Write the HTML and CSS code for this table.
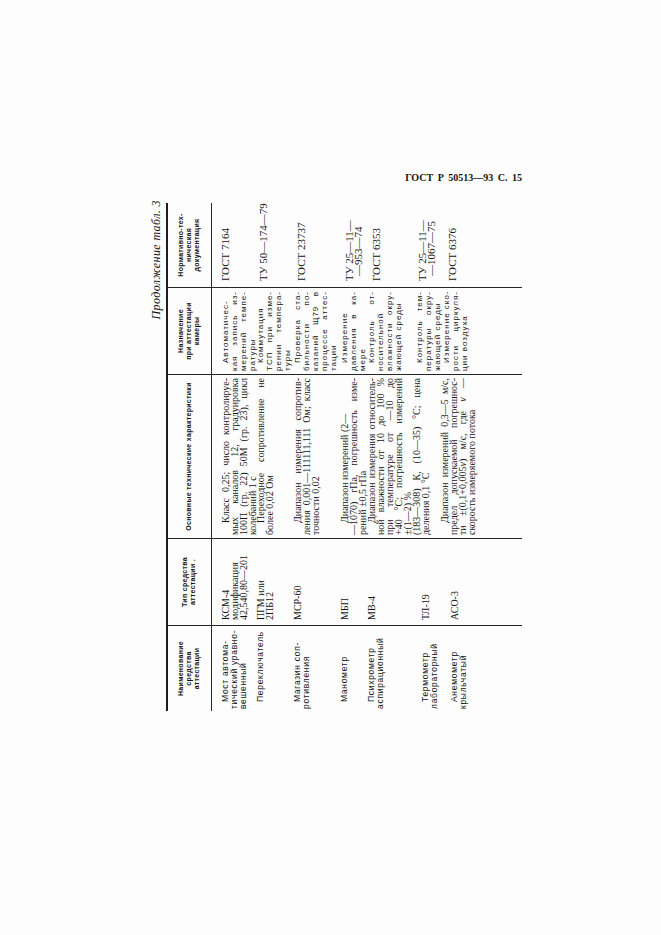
FILE: index.html
```html
<!DOCTYPE html>
<html lang="ru">
<head>
<meta charset="utf-8">
<title>ГОСТ Р 50513—93 С. 15</title>
<link rel="stylesheet" href="styles.css">
</head>
<body>
<div class="page">
  <div class="running-head">ГОСТ Р 50513—93 С. 15</div>
  <div class="rot-wrap">
    <div class="sheet">
      <div class="caption">Продолжение табл. 3</div>
      <div class="table">
        <div class="thead">
          <div class="th c1"><span>Наименование<br>средства<br>аттестации</span></div>
          <div class="th c2"><span>Тип средства<br>аттестации .</span></div>
          <div class="th c3"><span>Основные технические характеристики</span></div>
          <div class="th c4"><span>Назначение<br>при аттестации<br>камеры</span></div>
          <div class="th c5"><span>Нормативно-тех-<br>ническая<br>документация</span></div>
        </div>
        <div class="tbody">
          <div class="row first">
            <div class="td c1"><span class="ln ind">Мост автома-</span><span class="ln">тический уравно-</span><span class="ln">вешенный</span></div>
            <div class="td c2"><span class="ln">КСМ-4</span><span class="ln">модификация</span><span class="ln">42,540,80—201</span></div>
            <div class="td c3"><span class="ln j ind">Класс 0,25; число контролируе-</span><span class="ln j">мых каналов 12, градуировка</span><span class="ln j">100П (гр. 22) 50М (гр. 23), цикл</span><span class="ln">колебаний 1 с</span></div>
            <div class="td c4"><span class="ln j ind">Автоматичес-</span><span class="ln j">кая запись из-</span><span class="ln j">мерений темпе-</span><span class="ln">ратуры</span></div>
            <div class="td c5"><span class="ln">ГОСТ 7164</span></div>
          </div>
          <div class="row">
            <div class="td c1"><span class="ln ind">Переключатель</span></div>
            <div class="td c2"><span class="ln">ПГМ или</span><span class="ln">2ПБ12</span></div>
            <div class="td c3"><span class="ln j ind">Переходное сопротивление не</span><span class="ln">более 0,02 Ом</span></div>
            <div class="td c4"><span class="ln ind">Коммутация</span><span class="ln j">ТСП при изме-</span><span class="ln j">рении темпера-</span><span class="ln">туры</span></div>
            <div class="td c5 pt-3"><span class="ln">ТУ 50—174—79</span></div>
          </div>
          <div class="row">
            <div class="td c1"><span class="ln ind">Магазин соп-</span><span class="ln">ротивления</span></div>
            <div class="td c2"><span class="ln">МСР-60</span></div>
            <div class="td c3"><span class="ln j ind">Диапазон измерения сопротив-</span><span class="ln j">ления 0,001—111111,111 Ом; класс</span><span class="ln">точности 0,02</span></div>
            <div class="td c4"><span class="ln j ind">Проверка ста-</span><span class="ln j">бильности по-</span><span class="ln j">казаний Щ79 в</span><span class="ln j">процессе аттес-</span><span class="ln">тации</span></div>
            <div class="td c5 pt-4"><span class="ln">ГОСТ 23737</span></div>
          </div>
          <div class="row">
            <div class="td c1"><span class="ln ind">Манометр</span></div>
            <div class="td c2"><span class="ln">МБП</span></div>
            <div class="td c3"><span class="ln ind">Диапазон измерений (2—</span><span class="ln j">—1070) гПа, погрешность изме-</span><span class="ln">рений ±0,5 гПа</span></div>
            <div class="td c4"><span class="ln ind">Измерение</span><span class="ln j">давления в ка-</span><span class="ln">мере</span></div>
            <div class="td c5 pt-5"><span class="ln">ТУ 25—11—</span><span class="ln sub">—953—74</span></div>
          </div>
          <div class="row">
            <div class="td c1"><span class="ln ind">Психрометр</span><span class="ln">аспирационный</span></div>
            <div class="td c2"><span class="ln">МВ-4</span></div>
            <div class="td c3"><span class="ln j ind">Диапазон измерения относитель-</span><span class="ln j">ной влажности от 10 до 100 %</span><span class="ln j">при температуре от —10 до</span><span class="ln j">+40 °С; погрешность измерений</span><span class="ln">±(1—2) %</span></div>
            <div class="td c4"><span class="ln j ind">Контроль от-</span><span class="ln">носительной</span><span class="ln j">влажности окру-</span><span class="ln">жающей среды</span></div>
            <div class="td c5 pt-5"><span class="ln">ГОСТ 6353</span></div>
          </div>
          <div class="row">
            <div class="td c1 pt-9"><span class="ln ind">Термометр</span><span class="ln">лабораторный</span></div>
            <div class="td c2 pt-9"><span class="ln">ТЛ-19</span></div>
            <div class="td c3"><span class="ln j">(183—308) К, (10—35) °С; цена</span><span class="ln">деления 0,1 °С</span></div>
            <div class="td c4 pt-3"><span class="ln j ind">Контроль тем-</span><span class="ln j">пературы окру-</span><span class="ln">жающей среды</span></div>
            <div class="td c5 pt-6"><span class="ln">ТУ 25—11—</span><span class="ln sub">—1067—75</span></div>
          </div>
          <div class="row">
            <div class="td c1 pt-10"><span class="ln ind">Анемометр</span><span class="ln">крыльчатый</span></div>
            <div class="td c2 pt-10"><span class="ln">АСО-3</span></div>
            <div class="td c3"><span class="ln j ind">Диапазон измерений 0,3—5 м/с,</span><span class="ln j">предел допускаемой погрешнос-</span><span class="ln j">ти ±(0,1+0,005<i>v</i>) м/с, где <i>v</i> —</span><span class="ln">скорость измеряемого потока</span></div>
            <div class="td c4 pt-2"><span class="ln j ind">Измерение ско-</span><span class="ln j">рости циркуля-</span><span class="ln">ции воздуха</span></div>
            <div class="td c5 pt-8"><span class="ln">ГОСТ 6376</span></div>
          </div>
        </div>
      </div>
    </div>
  </div>
</div>
</body>
</html>
```
FILE: styles.css
```css
html, body {
  margin: 0;
  padding: 0;
  background: #fdfdfd;
  color: #141414;
}

.page {
  margin-left: 146px;
  width: 376px;
  padding-top: 172px;
}

.running-head {
  font-family: "Liberation Serif", serif;
  font-weight: bold;
  font-size: 10px;
  line-height: 12px;
  word-spacing: 2px;
  text-align: right;
}

.rot-wrap {
  margin-top: 16px;
  width: 376px;
  height: 511px;
}

.sheet {
  width: 511px;
  height: 376px;
  transform-origin: 0 0;
  transform: rotate(-90deg) translateX(-100%);
}

.caption {
  height: 20px;
  line-height: 20px;
  text-align: right;
  font-family: "Liberation Serif", serif;
  font-style: italic;
  font-size: 12px;
  letter-spacing: 0.4px;
}

.table {
  width: 508px;
  border-top: 2px solid #1e1e1e;
}

.thead,
.tbody {
  display: grid;
  grid-template-columns: 85px 87px 164px 87px 85px;
}

.thead {
  height: 43px;
  border-bottom: 1px solid #262626;
}

.tbody {
  height: 310px;
  grid-template-rows: 44px 37px 47px 27px 45px 28px 1fr;
}

.row {
  display: contents;
}

.th,
.td {
  box-sizing: border-box;
  min-width: 0;
}

.th.c2, .th.c3, .th.c4, .th.c5,
.td.c2, .td.c3, .td.c4, .td.c5 {
  border-left: 1px solid #262626;
}

.th {
  display: flex;
  align-items: center;
  justify-content: center;
  text-align: center;
  padding-bottom: 2px;
  font-family: "Liberation Sans", Arial, sans-serif;
  font-weight: bold;
  font-size: 7px;
  line-height: 8px;
  letter-spacing: 0.3px;
}

.row.first .td {
  padding-top: 9px;
}

.ln {
  display: block;
  white-space: nowrap;
}

.ln.j {
  text-align: justify;
  text-align-last: justify;
}

.td {
  line-height: 9px;
}

.c1.td {
  font-family: "Liberation Sans", Arial, sans-serif;
  font-size: 8.5px;
  letter-spacing: 0.7px;
  padding-left: 2px;
  padding-right: 1px;
}

.c1 .ind { text-indent: 7px; }

.c2.td {
  font-family: "Liberation Serif", serif;
  font-size: 10px;
  padding-left: 5px;
}

.c3.td {
  font-family: "Liberation Serif", serif;
  font-size: 10px;
  padding-left: 3px;
  padding-right: 3px;
}

.c3 .ind { text-indent: 12px; }

.c4.td {
  font-family: "Liberation Sans", Arial, sans-serif;
  font-size: 8px;
  letter-spacing: 1px;
  padding-left: 3px;
  padding-right: 3px;
}

.c4 .ind { text-indent: 8px; }

.c5.td {
  font-family: "Liberation Serif", serif;
  font-size: 11px;
  padding-left: 6px;
}

.c5 .sub { padding-left: 5px; }

.td.pt-2 { padding-top: 2px; }
.td.pt-3 { padding-top: 3px; }
.td.pt-4 { padding-top: 4px; }
.td.pt-5 { padding-top: 5px; }
.td.pt-6 { padding-top: 6px; }
.td.pt-8 { padding-top: 8px; }
.td.pt-9 { padding-top: 9px; }
.td.pt-10 { padding-top: 10px; }
```
